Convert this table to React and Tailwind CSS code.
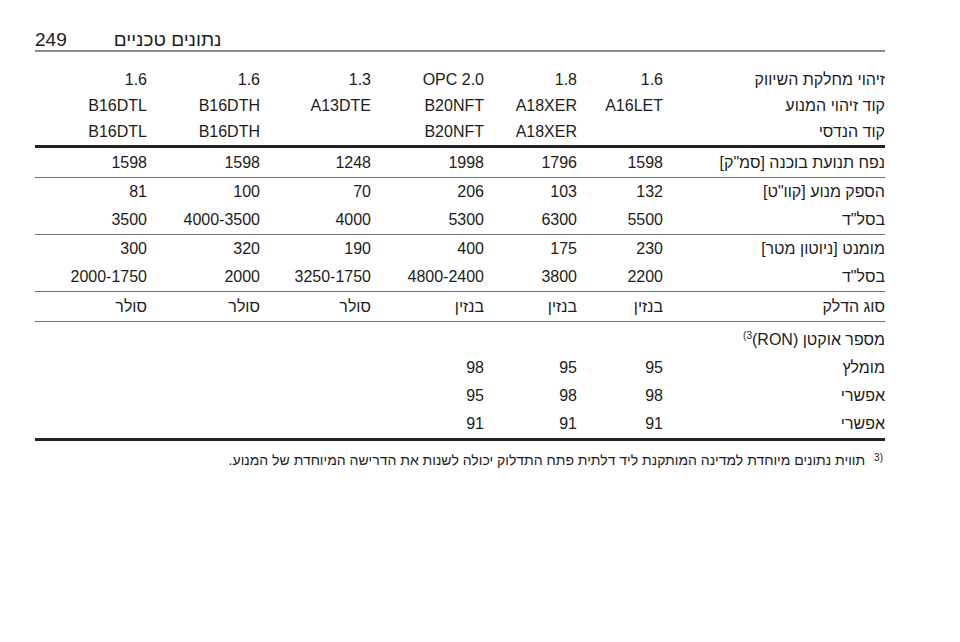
import React from "react";

const cols = "grid grid-cols-[222px_86px_93px_113px_111px_113px_112px]";

function Row({ label, values, h = "h-[28px]" }) {
  const vals = [...values];
  while (vals.length < 6) vals.push("");
  return (
    <div className={`${cols} ${h} items-center`}>
      <div className="text-right">{label}</div>
      {vals.map((v, i) => (
        <div key={i} dir="ltr" className="text-right">
          {v}
        </div>
      ))}
    </div>
  );
}

export default function App() {
  return (
    <div
      className="w-[960px] h-[642px] bg-white text-[#1c1c1c] overflow-hidden"
      style={{ fontFamily: '"Liberation Sans", Arial, sans-serif' }}
    >
      <div className="ml-[35px] w-[850px] pt-[29px]">
        <div className="flex items-end gap-[47px] h-[23px] border-b-2 border-[#8c8c8c] text-[19px] leading-[21px]">
          <span>249</span>
          <span dir="rtl">נתונים טכניים</span>
        </div>

        <div dir="rtl" className="text-[16px] leading-[18px]">
          <div className="pt-[15px]">
            <Row label="זיהוי מחלקת השיווק" values={["1.6", "1.8", "OPC 2.0", "1.3", "1.6", "1.6"]} h="h-[26px]" />
            <Row label="קוד זיהוי המנוע" values={["A16LET", "A18XER", "B20NFT", "A13DTE", "B16DTH", "B16DTL"]} h="h-[26px]" />
            <Row label="קוד הנדסי" values={["", "A18XER", "B20NFT", "", "B16DTH", "B16DTL"]} h="h-[26px]" />
          </div>
          <div className="border-t-[3px] border-[#222]">
            <Row label='נפח תנועת בוכנה [סמ"ק]' values={["1598", "1796", "1998", "1248", "1598", "1598"]} h="h-[29px]" />
          </div>
          <div className="border-t border-[#6f6f6f]">
            <Row label='הספק מנוע [קוו"ט]' values={["132", "103", "206", "70", "100", "81"]} />
            <Row label='בסל"ד' values={["5500", "6300", "5300", "4000", "4000-3500", "3500"]} />
          </div>
          <div className="border-t border-[#6f6f6f]">
            <Row label="מומנט [ניוטון מטר]" values={["230", "175", "400", "190", "320", "300"]} />
            <Row label='בסל"ד' values={["2200", "3800", "4800-2400", "3250-1750", "2000", "2000-1750"]} />
          </div>
          <div className="border-t border-[#6f6f6f]">
            <Row label="סוג הדלק" values={["בנזין", "בנזין", "בנזין", "סולר", "סולר", "סולר"]} h="h-[29px]" />
          </div>
          <div className="border-t border-[#6f6f6f] pt-[4px]">
            <Row
              label={
                <span>
                  מספר אוקטן (RON)
                  <span dir="ltr" className="text-[10px] align-[6px] leading-none">(3</span>
                </span>
              }
              values={[]}
            />
            <Row label="מומלץ" values={["95", "95", "98"]} />
            <Row label="אפשרי" values={["98", "98", "95"]} />
            <Row label="אפשרי" values={["91", "91", "91"]} />
          </div>
          <div className="border-t-[3px] border-[#222]" />
          <div className="mt-[9px] flex items-start gap-[9px] text-[14px] leading-[20px]">
            <span dir="ltr" className="text-[10px] leading-none mt-[3px] pr-[2px]">3)</span>
            <span>תווית נתונים מיוחדת למדינה המותקנת ליד דלתית פתח התדלוק יכולה לשנות את הדרישה המיוחדת של המנוע.</span>
          </div>
        </div>
      </div>
    </div>
  );
}
